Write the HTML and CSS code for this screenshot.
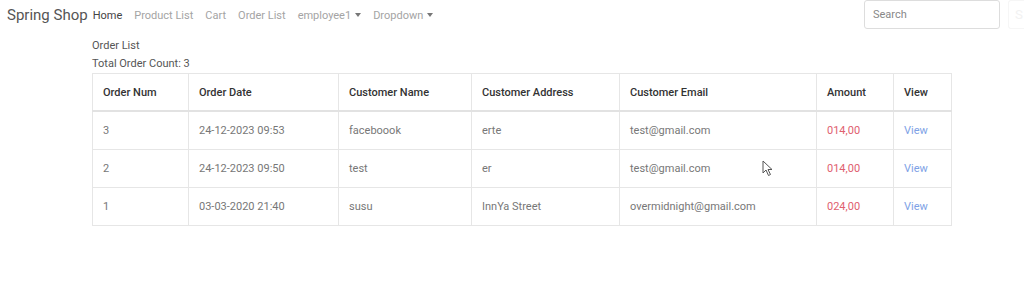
FILE: index.html
```html
<!DOCTYPE html>
<html lang="en">
<head>
    <meta charset="UTF-8">
    <title>Spring Shop</title>
    <link rel="stylesheet" href="styles.css">
</head>
<body>
    <nav class="navbar">
        <a class="brand" href="#">Spring Shop</a>
        <ul class="nav-links">
            <li><a class="active" href="#">Home</a></li>
            <li><a href="#">Product List</a></li>
            <li><a href="#">Cart</a></li>
            <li><a href="#">Order List</a></li>
            <li><a class="dropdown" href="#">employee1</a></li>
            <li><a class="dropdown" href="#">Dropdown</a></li>
        </ul>
        <form class="search">
            <input type="text" placeholder="Search">
            <button type="button" class="search-btn">S</button>
        </form>
    </nav>

    <div class="content">
        <div class="title">Order List</div>
        <div class="count">Total Order Count: 3</div>
        <table class="orders">
            <colgroup>
                <col style="width: 96px">
                <col style="width: 150px">
                <col style="width: 133px">
                <col style="width: 148px">
                <col style="width: 197px">
                <col style="width: 77px">
                <col style="width: 58px">
            </colgroup>
            <thead>
                <tr>
                    <th>Order Num</th>
                    <th>Order Date</th>
                    <th>Customer Name</th>
                    <th>Customer Address</th>
                    <th>Customer Email</th>
                    <th>Amount</th>
                    <th>View</th>
                </tr>
            </thead>
            <tbody>
                <tr>
                    <td>3</td>
                    <td>24-12-2023 09:53</td>
                    <td>faceboook</td>
                    <td>erte</td>
                    <td>test@gmail.com</td>
                    <td class="amount">014,00</td>
                    <td><a href="#">View</a></td>
                </tr>
                <tr>
                    <td>2</td>
                    <td>24-12-2023 09:50</td>
                    <td>test</td>
                    <td>er</td>
                    <td class="cursor-cell">test@gmail.com
                        <svg class="cursor" width="12" height="17" viewBox="0 0 12 17">
                            <path d="M1 1 L1 13 L4 10 L6.5 15.5 L8.5 14.5 L6 9.5 L10 9.5 Z" fill="#fff" stroke="#555" stroke-width="1"/>
                        </svg>
                    </td>
                    <td class="amount">014,00</td>
                    <td><a href="#">View</a></td>
                </tr>
                <tr>
                    <td>1</td>
                    <td>03-03-2020 21:40</td>
                    <td>susu</td>
                    <td>InnYa Street</td>
                    <td>overmidnight@gmail.com</td>
                    <td class="amount">024,00</td>
                    <td><a href="#">View</a></td>
                </tr>
            </tbody>
        </table>
    </div>
</body>
</html>
```

FILE: styles.css
```css
body {
    font-family: Roboto, 'Liberation Sans', sans-serif;
    margin: 0;
    background-color: #fff;
    color: #555;
    font-size: 11px;
}

a {
    text-decoration: none;
}

.navbar {
    display: flex;
    align-items: center;
    height: 30px;
    padding: 0 0 0 7px;
}

.brand {
    font-size: 15px;
    color: #555;
    margin-right: 5px;
}

.nav-links {
    display: flex;
    list-style: none;
    margin: 0;
    padding: 0;
    gap: 12px;
}

.nav-links a {
    color: #a4a4a4;
    font-size: 11px;
}

.nav-links a.active {
    color: #444;
}

.dropdown::after {
    content: '';
    display: inline-block;
    margin-left: 4px;
    vertical-align: 2px;
    border-top: 4px solid #777;
    border-left: 3px solid transparent;
    border-right: 3px solid transparent;
}

.search {
    margin-left: auto;
    display: flex;
    align-self: flex-start;
    gap: 8px;
}

.search input {
    width: 118px;
    height: 27px;
    padding: 0 8px;
    border: 1px solid #ddd;
    border-radius: 3px;
    font-family: inherit;
    font-size: 11px;
    color: #555;
    box-sizing: content-box;
}

.search input::placeholder {
    color: #888;
}

.search-btn {
    width: 16px;
    height: 29px;
    border: 1px solid #f6f6f6;
    border-right: none;
    border-radius: 3px 0 0 3px;
    background: #fff;
    color: #f2f2f2;
    font-family: inherit;
    padding: 0 0 0 6px;
    text-align: left;
}

.content {
    padding: 7px 0 0 92px;
}

.title,
.count {
    color: #555;
    font-size: 11px;
    line-height: 18px;
}

.orders {
    border-collapse: collapse;
    width: 859px;
    table-layout: fixed;
}

.orders th,
.orders td {
    border: 1px solid #e6e6e6;
    text-align: left;
    padding: 0 10px;
    height: 37px;
    white-space: nowrap;
}

.orders th {
    height: 36px;
    color: #333;
    font-weight: 500;
    border-bottom: 2px solid #e2e2e2;
}

.orders td {
    color: #777;
}

.orders td.amount {
    color: #e0606e;
}

.orders td a {
    color: #7ea2e6;
}

.cursor-cell {
    position: relative;
}

.cursor {
    position: absolute;
    left: 142px;
    top: 10px;
}
```
